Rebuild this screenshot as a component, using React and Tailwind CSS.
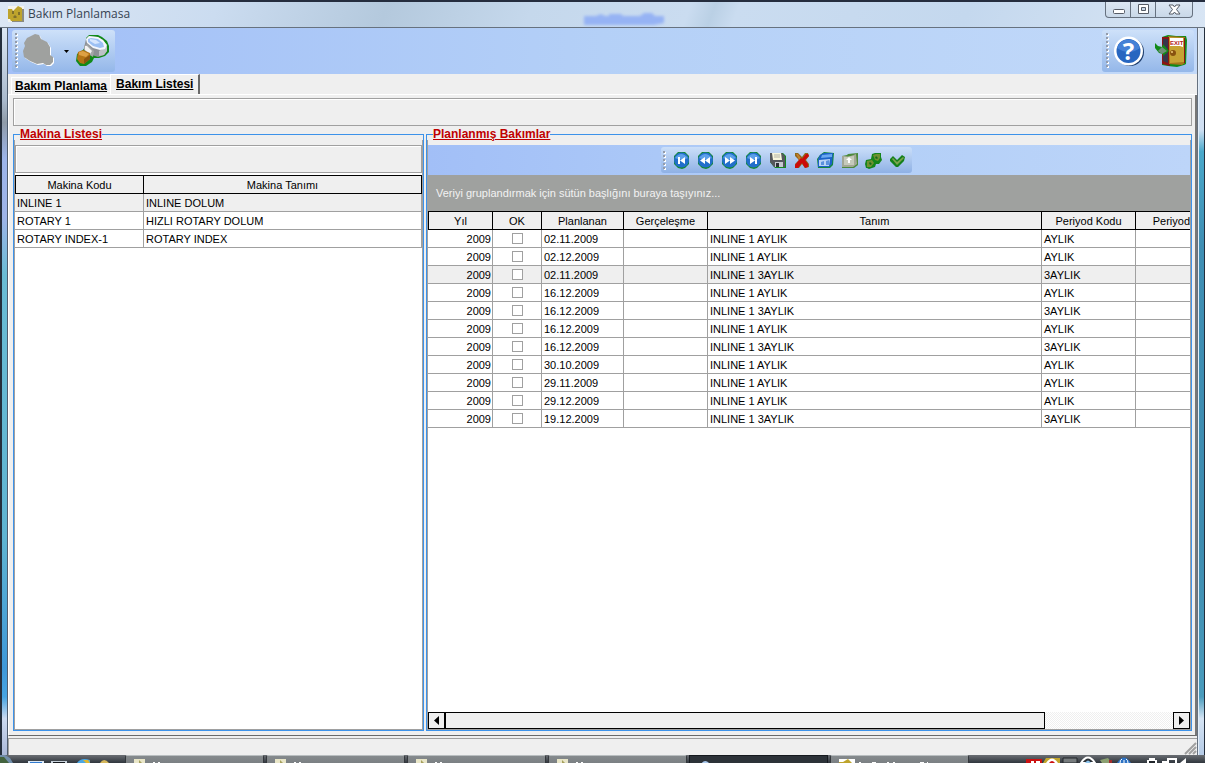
import React, { useState } from 'react';

const machines = [
  { code: 'INLINE 1', name: 'INLINE DOLUM' },
  { code: 'ROTARY 1', name: 'HIZLI ROTARY DOLUM' },
  { code: 'ROTARY INDEX-1', name: 'ROTARY INDEX' },
];

const plans = [
  { date: '02.11.2009', title: 'INLINE 1 AYLIK', period: 'AYLIK' },
  { date: '02.12.2009', title: 'INLINE 1 AYLIK', period: 'AYLIK' },
  { date: '02.11.2009', title: 'INLINE 1 3AYLIK', period: '3AYLIK' },
  { date: '16.12.2009', title: 'INLINE 1 AYLIK', period: 'AYLIK' },
  { date: '16.12.2009', title: 'INLINE 1 3AYLIK', period: '3AYLIK' },
  { date: '16.12.2009', title: 'INLINE 1 AYLIK', period: 'AYLIK' },
  { date: '16.12.2009', title: 'INLINE 1 3AYLIK', period: '3AYLIK' },
  { date: '30.10.2009', title: 'INLINE 1 AYLIK', period: 'AYLIK' },
  { date: '29.11.2009', title: 'INLINE 1 AYLIK', period: 'AYLIK' },
  { date: '29.12.2009', title: 'INLINE 1 AYLIK', period: 'AYLIK' },
  { date: '19.12.2009', title: 'INLINE 1 3AYLIK', period: '3AYLIK' },
];

const headCell = 'h-[18px] p-0 font-normal border-r border-b border-black bg-[#efefef] whitespace-nowrap overflow-hidden';
const bodyCell = 'h-[18px] py-0 pl-[2px] pr-[1px] border-r border-b border-[#a0a0a0] whitespace-nowrap overflow-hidden';

function AppIcon() {
  return (
    <svg width="16" height="16" viewBox="0 0 16 16" aria-hidden="true">
      <path d="M0 0h16v16H0z" fill="#f4f4ee" />
      <path d="M0 3h4l1 2 5-5 4 2v13H3l-1-2H0z" fill="#bea42c" />
      <path d="M14 3h2v13H4v-1h10z" fill="#8b8b80" />
      <path d="M4 5h2v3H4zM10 6h2v3h-2zM5 11l2-2 2 2-1 1H6z" fill="#80702c" />
    </svg>
  );
}

function MaskIcon() {
  return (
    <svg width="34" height="34" viewBox="0 0 34 34" aria-hidden="true">
      <path transform="translate(1 1)" d="M9 2l4-2 4 1 2 4 6 3 3 5v8l3 2v5l-3 3h-4l-3-2-6 1-7-3-6-4-1-6 2-5-1-3 3-5z" fill="#fff" />
      <path d="M9 2l4-2 4 1 2 4 6 3 3 5v8l3 2v5l-3 3h-4l-3-2-6 1-7-3-6-4-1-6 2-5-1-3 3-5z" fill="#9fa19f" />
    </svg>
  );
}

function SearchIcon() {
  return (
    <svg width="34" height="32" viewBox="0 0 34 32" aria-hidden="true">
      <path d="M10 3l3-3h9l4 2 5 4 2 5v6l-4 4-6 2h-5l-2 4-6 4H4l-4-5 1-7 6-4 3-5z" fill="#118a18" />
      <path d="M10 4l3-3 9 1 5 3 4 6v5l-3 4-6 2-6-2-8-7z" fill="#8d9196" />
      <path d="M28 13l3-2v5l-3 4-5 1v-5z" fill="#bdc1c6" />
      <path d="M10 4l3-3 9 1 5 3 4 5-2 4-5 1-7-2-6-5z" fill="#f4f7fc" />
      <path d="M12 4l3-1 7 1 5 4 1 4-4 1-7-2-5-4z" fill="#9cc0f3" />
      <path d="M14 4l6 1 4 3-5 1-5-3z" fill="#d6e6fd" />
      <path d="M8 11l3-2 7 7-1 6-5-3-4-4z" fill="#a4a6a8" />
      <path d="M9 11l2 0 5 5-2 3-5-4z" fill="#f2f2f2" />
      <path d="M2 17l5-2 7 3v6l-6 5-4-1-3-4z" fill="#b47415" />
      <path d="M3 17l4-1 6 3-3 3-7-2z" fill="#dda044" />
      <path d="M8 24l6-4v4l-6 5z" fill="#8d5510" />
    </svg>
  );
}

function HelpIcon() {
  return (
    <svg width="32" height="32" viewBox="0 0 32 32" aria-hidden="true">
      <circle cx="17" cy="17" r="14" fill="#1c3c6c" />
      <circle cx="15.500" cy="16" r="14.500" fill="#fff" />
      <circle cx="15.500" cy="16" r="12" fill="#2766c0" />
      <path d="M4 13a12 12 0 0 1 23 0q-11 8-23 0z" fill="#4481d6" />
      <text x="15.500" y="25" textAnchor="middle" fill="#fff" className="font-['Open_Sans',sans-serif] text-[24px] font-bold">?</text>
    </svg>
  );
}

function ExitIcon() {
  return (
    <svg width="32" height="32" viewBox="0 0 32 32" aria-hidden="true">
      <path d="M7 2l6-2 8 1 10 0 1 4-1 24-2 1-7 2-9-1-6-1z" fill="#118a18" />
      <path d="M7 2h8v29l-8-2z" fill="#8b1515" />
      <path d="M8 4h5v24l-5-2z" fill="#36364a" />
      <path d="M13 1l17 1v26l-3 2-13-1z" fill="#a5761a" />
      <path d="M14 2l15 1v24l-14 1z" fill="#c6a334" />
      <path d="M13 2h1v28h-1zM29 3h1v25h-1z" fill="#8b1515" />
      <path d="M15 3h13v9l-3-1H15z" fill="#fff" />
      <text x="15" y="10" fill="#b32020" className="font-['Liberation_Sans',sans-serif] text-[6px] font-bold">EXIT</text>
      <circle cx="18" cy="18" r="3" fill="#87520f" />
      <circle cx="17" cy="17" r="1" fill="#f0ce78" />
      <path d="M0 8l3 3 4 1 1-3 6 7-6 5v-2l-4-1-4-5z" fill="#118a18" />
      <path d="M7 12l5 4-5 3-4-3z" fill="#6f8f78" />
    </svg>
  );
}

function NavIcon({ kind }) {
  return (
    <svg width="17" height="17" viewBox="0 0 17 17" aria-hidden="true">
      <path d="M5 0h7l4 4v8l-4 4-3 1-4-1-4-4V4z" fill="#158a35" />
      <circle cx="8.500" cy="8" r="7.500" fill="#226fcb" />
      <path d="M2 6q6-8 13 0-6 3-13 0z" fill="#5ba0ea" />
      {kind === 'first' && <path d="M5 5h2v7H5zM12 5v7L7 8.500z" fill="#fff" />}
      {kind === 'prev' && <path d="M8 5v7L3 8.500zM13 5v7L8 8.500z" fill="#fff" />}
      {kind === 'next' && <path d="M4 5v7l5-3.500zM9 5v7l5-3.500z" fill="#fff" />}
      {kind === 'last' && <path d="M10 5h2v7h-2zM5 5v7l5-3.500z" fill="#fff" />}
    </svg>
  );
}

function SaveIcon() {
  return (
    <svg width="17" height="17" viewBox="0 0 17 17" aria-hidden="true">
      <path d="M1 1h13l3 3v12H6l-5-6z" fill="#138a1c" />
      <path d="M1 1h12l3 3v11H5l-4-5z" fill="#55575c" />
      <path d="M3 1h9l1 7H4z" fill="#f7f5dc" />
      <path d="M5 3h6M5 5h6" stroke="#b3b3a8" />
      <path d="M6 10h8v5H6z" fill="#c7cad0" />
      <path d="M7 11h3v4H7z" fill="#303238" />
    </svg>
  );
}

function DeleteIcon() {
  return (
    <svg width="17" height="17" viewBox="0 0 17 17" aria-hidden="true">
      <path d="M2 1h3l4 4 3-4h3l1 3-3 4 3 4v3l-4 1-3-4-3 4H2l0-4 4-4-4-4z" fill="#8c6b1c" />
      <path d="M3 2h2l4 5 4-5h2l1 2-4 4 3 4v3l-3 1-3-5-4 5H2v-3l4-5z" fill="#cc0b0b" />
      <path d="M3 2h2l3 4-2 2z" fill="#b8862e" />
    </svg>
  );
}

function CalendarIcon() {
  return (
    <svg width="17" height="17" viewBox="0 0 17 17" aria-hidden="true">
      <path d="M3 3l4-3 10 1-1 12-3 3H1L0 7z" fill="#15883d" />
      <path d="M3 3l4-2h9l-1 11-3 3H1L1 7z" fill="#1c62c8" />
      <path d="M5 3l10-1v3L4 6z" fill="#6aa8f0" />
      <path d="M2 8l11-1-1 7H2z" fill="#b9d3f6" />
      <path d="M4 10l3-1v4H4zM9 9l3-1v5H9z" fill="#5b92de" />
    </svg>
  );
}

function FolderIcon() {
  return (
    <svg width="17" height="17" viewBox="0 0 17 17" aria-hidden="true">
      <path d="M1 4l5-1 1-1 10-1v12l-4 3H1z" fill="#4c8a3a" />
      <path d="M1 4h3l3 1 8-3 1 10-4 3H1z" fill="#a2a795" />
      <path d="M3 5l10-1v9H3z" fill="#c6cabb" />
      <path d="M8 5l3 3H9v3H7V8H5z" fill="#fff" />
    </svg>
  );
}

function GearIcon() {
  return (
    <svg width="17" height="17" viewBox="0 0 17 17" aria-hidden="true">
      <path d="M7 2l3-1 3 0 3 0v4l1 3-3 4-3 0-1 3-3 1-3 1-2-1H1l-1-4 1-4 5-1z" fill="#15851c" />
      <path d="M8 3l3-1 4 0 0 4-2 3-3-1zM2 9l5-1 2 3-3 4-4 0z" fill="#6f9130" />
      <path d="M11 4l2 2-1 1-2-1zM5 10l2 2-2 1-1-2z" fill="#176b1d" />
    </svg>
  );
}

function CheckIcon() {
  return (
    <svg width="17" height="17" viewBox="0 0 17 17" aria-hidden="true">
      <path d="M1 7l3-3 4 4 5-5 3 2-1 4-6 6-2 0-6-6z" fill="#15801b" />
      <path d="M3 7l1-1 4 4 6-5 1 1-7 7z" fill="#7da34e" />
    </svg>
  );
}

function Grip({ className }) {
  return (
    <svg width="3" className={className} aria-hidden="true">
      <defs>
        <pattern id="grip" width="3" height="4" patternUnits="userSpaceOnUse">
          <path d="M1 1h2v2H1z" fill="#fff" />
          <path d="M0 0h2v2H0z" fill="#949cab" />
        </pattern>
      </defs>
      <rect width="3" height="100%" fill="url(#grip)" />
    </svg>
  );
}

function TitleBar() {
  return (
    <header className="h-7 shrink-0 flex items-start justify-between pl-2 pr-3 border-t-2 border-b border-t-[#252d3e] border-b-[#67727f] bg-[linear-gradient(110deg,#dce7f4_0%,#cbdcf0_18%,#b4c9dd_32%,#c5d8ec_44%,#cadcf0_57%,#bad0e5_59%,#cadcf0_61%,#c4d8ee_80%,#d8e5f4_100%)]">
      <div className="flex items-center gap-1 h-6">
        <AppIcon />
        <h1 className="font-['Open_Sans',sans-serif] text-[12px] leading-4 text-[#364352]">Bakım Planlamasa</h1>
      </div>
      {/* blurred caption of the window behind the glass */}
      <svg width="90" height="18" className="mt-2 mr-auto ml-[450px]" aria-hidden="true">
        <defs>
          <filter id="soft" x="-10%" y="-40%" width="120%" height="180%"><feGaussianBlur stdDeviation="1.500" /></filter>
        </defs>
        <path d="M4 6h12l5-2 4 2h4V4h12l2 2h17l4-3h8l3 3h9v7l-10 2H4z" fill="#96b3f4" filter="url(#soft)" />
      </svg>
      <div className="flex h-4 rounded-b-[4px] border border-t-0 border-[#66717f] bg-gradient-to-b from-[#dce7f3] to-[#c9d8e8]">
        <button type="button" aria-label="Simge durumuna küçült" className="w-[25px] flex items-center justify-center border-r border-[#66717f]">
          <svg width="13" height="11"><rect x="1.500" y="5.500" width="11" height="4" rx="1" fill="#fff" stroke="#565c66" /></svg>
        </button>
        <button type="button" aria-label="Ekranı kapla" className="w-[25px] flex items-center justify-center border-r border-[#66717f]">
          <svg width="13" height="11"><path d="M1.500.500h10v9h-10z" fill="#fff" stroke="#565c66" /><path d="M4.500 3.500h4v3h-4z" fill="#c9d8e8" stroke="#565c66" /></svg>
        </button>
        <button type="button" aria-label="Kapat" className="w-9 flex items-center justify-center">
          <svg width="13" height="12"><path d="M1 1h4l1.500 2L8 1h4L8.500 5.500 12 10H8L6.500 8 5 10H1l3.500-4.500z" fill="#fff" stroke="#565c66" /></svg>
        </button>
      </div>
    </header>
  );
}

function MainToolbar() {
  return (
    <div className="h-[46px] shrink-0 flex items-center justify-between pl-1 pr-[3px] bg-gradient-to-r from-[#a2bff7] via-[#b4d0f7] to-[#c2d9f9]">
      <div className="h-[42px] w-[103px] flex items-center gap-1 pl-[3px] rounded-[3px] bg-gradient-to-b from-[#cee1f9] to-[#94b7e9]">
        <Grip className="h-9" />
        <button type="button" aria-label="Makina"><MaskIcon /></button>
        <button type="button" aria-label="Makina seçenekleri" className="w-3 flex justify-center">
          <svg width="5" height="3"><path d="M0 0h5L2.500 3z" /></svg>
        </button>
        <button type="button" aria-label="Ara"><SearchIcon /></button>
      </div>
      <div className="h-[42px] w-[92px] flex items-center gap-1 pl-1 rounded-[3px] bg-gradient-to-b from-[#cee1f9] to-[#94b7e9]">
        <Grip className="h-9" />
        <div className="flex gap-[10px]">
          <button type="button" aria-label="Yardım"><HelpIcon /></button>
          <button type="button" aria-label="Çıkış"><ExitIcon /></button>
        </div>
      </div>
    </div>
  );
}

function GroupBox({ title, children }) {
  return (
    <fieldset className="min-w-0 h-full flex flex-col border border-[#3c92ea]">
      <legend className="ml-[6px] h-3 text-[12px] leading-3 font-bold underline text-[#c00000]">{title}</legend>
      <div className="flex-1 min-h-0 flex flex-col border-l border-b border-r border-[#a0a0a0]">
        {children}
      </div>
    </fieldset>
  );
}

function MachineList() {
  return (
    <GroupBox title="Makina Listesi">
      <div className="mt-[5px] h-7 shrink-0 border border-[#a0a0a0] shadow-[inset_1px_1px_0_#fff]" />
      <div className="flex-1 bg-white pt-[2px]">
        <table className="w-full table-fixed border-separate border-spacing-0 border-t border-black">
          <colgroup>
            <col className="w-[129px]" />
            <col />
          </colgroup>
          <thead>
            <tr>
              <th className={`${headCell} border-l`}>Makina Kodu</th>
              <th className={headCell}>Makina Tanımı</th>
            </tr>
          </thead>
          <tbody>
            {machines.map((m, i) => (
              <tr key={m.code} className={i === 0 ? 'bg-[#efefef]' : 'bg-white'}>
                <td className={bodyCell}>{m.code}</td>
                <td className={bodyCell}>{m.name}</td>
              </tr>
            ))}
          </tbody>
        </table>
      </div>
    </GroupBox>
  );
}

function PlanToolbar() {
  return (
    <div className="mt-[5px] h-[30px] shrink-0 flex items-center justify-center bg-gradient-to-r from-[#a2bff7] via-[#b1cef7] to-[#bdd5f9]">
      <div className="h-[26px] w-[251px] flex items-center gap-[7px] pl-[2px] mr-[46px] rounded-[3px] bg-gradient-to-b from-[#cbdff9] to-[#8fb1e5]">
        <Grip className="h-[19px]" />
        <button type="button" aria-label="İlk kayıt"><NavIcon kind="first" /></button>
        <button type="button" aria-label="Önceki kayıt"><NavIcon kind="prev" /></button>
        <button type="button" aria-label="Sonraki kayıt"><NavIcon kind="next" /></button>
        <button type="button" aria-label="Son kayıt"><NavIcon kind="last" /></button>
        <button type="button" aria-label="Kaydet"><SaveIcon /></button>
        <button type="button" aria-label="Sil"><DeleteIcon /></button>
        <button type="button" aria-label="Takvim"><CalendarIcon /></button>
        <button type="button" aria-label="Aktar"><FolderIcon /></button>
        <button type="button" aria-label="Ayarlar"><GearIcon /></button>
        <button type="button" aria-label="Onayla"><CheckIcon /></button>
      </div>
    </div>
  );
}

function PlanTable() {
  const [done, setDone] = useState({});

  const toggle = (i) => {
    setDone({ ...done, [i]: !done[i] });
  };

  return (
    <table className="w-full table-fixed border-separate border-spacing-0 border-t border-black">
      <colgroup>
        <col className="w-[65px]" />
        <col className="w-[49px]" />
        <col className="w-[82px]" />
        <col className="w-[84px]" />
        <col />
        <col className="w-[94px]" />
        <col className="w-[54px]" />
      </colgroup>
      <thead>
        <tr>
          <th className={`${headCell} border-l`}>Yıl</th>
          <th className={headCell}>OK</th>
          <th className={headCell}>Planlanan</th>
          <th className={headCell}>Gerçeleşme</th>
          <th className={headCell}>Tanım</th>
          <th className={headCell}>Periyod Kodu</th>
          <th className="h-[18px] p-0 text-right font-normal border-b border-black bg-[#efefef] whitespace-nowrap">Periyod</th>
        </tr>
      </thead>
      <tbody>
        {plans.map((p, i) => (
          <tr key={i} className={i === 2 ? 'bg-[#efefef]' : 'bg-white'}>
            <td className={`${bodyCell} text-right`}>2009</td>
            <td className={bodyCell}>
              <input
                type="checkbox"
                aria-label={`OK ${p.date}`}
                checked={!!done[i]}
                onChange={() => toggle(i)}
                className="block mx-auto appearance-none w-[11px] h-[11px] border border-[#a0a0a0] bg-white checked:bg-[#a0a0a0]"
              />
            </td>
            <td className={bodyCell}>{p.date}</td>
            <td className={bodyCell}></td>
            <td className={bodyCell}>{p.title}</td>
            <td className={bodyCell}>{p.period}</td>
            <td className="border-b border-[#a0a0a0]"></td>
          </tr>
        ))}
      </tbody>
    </table>
  );
}

function ScrollBar() {
  return (
    <div className="h-[17px] shrink-0 flex">
      <button type="button" aria-label="Sola kaydır" className="w-[17px] flex items-center justify-center border border-black bg-[#efefef]">
        <svg width="5" height="9"><path d="M5 0v9L0 4.500z" /></svg>
      </button>
      <div className="flex-1 flex bg-[repeating-conic-gradient(#efefef_0_25%,#ffffff_0_50%)] bg-[length:2px_2px]">
        <div className="flex-[14] border border-black bg-[#efefef]" />
        <div className="flex-[3]" />
      </div>
      <button type="button" aria-label="Sağa kaydır" className="w-[17px] flex items-center justify-center border border-black bg-[#efefef]">
        <svg width="5" height="9"><path d="M0 0v9l5-4.500z" /></svg>
      </button>
    </div>
  );
}

function PlannedList() {
  return (
    <GroupBox title="Planlanmış Bakımlar">
      <PlanToolbar />
      <div className="h-9 shrink-0 flex items-center px-2 bg-[#9fa19f] text-[#f2f2f2]">
        Veriyi gruplandırmak için sütün başlığını buraya taşıyınız...
      </div>
      <div className="flex-1 min-h-0 bg-white overflow-hidden">
        <PlanTable />
      </div>
      <ScrollBar />
    </GroupBox>
  );
}

function TaskButton({ active, children }) {
  return (
    <button
      type="button"
      className={
        active
          ? 'w-[139px] h-7 pl-2 flex items-start border border-[#15191e] bg-[#2c3238]'
          : 'w-[139px] h-7 pl-2 flex items-start rounded-t-[2px] border border-[#33373b] border-t-[#b9bec0] bg-gradient-to-b from-[#858a8d] to-[#606568]'
      }
    >
      {children}
    </button>
  );
}

function NoteMark() {
  return (
    <svg width="40" height="10" aria-hidden="true">
      <path d="M0 3h11v7H0z" fill="#e9e6c8" />
      <path d="M5 4l3 3-3 2z" fill="#a6a05c" />
      <path d="M19 6h2v1h-2zM24 6h2v1h-2z" fill="#fff" />
    </svg>
  );
}

function Taskbar() {
  return (
    <footer className="h-2 shrink-0 flex items-start overflow-hidden bg-gradient-to-b from-[#6b6f74] to-[#30363d]">
      <svg width="125" height="8" className="shrink-0" aria-hidden="true">
        <path d="M0 0h5l5 3 3 5H0z" fill="#718eaa" />
        <path d="M0 2h4l5 6H0z" fill="#43633e" />
        <path d="M28 6h16v2H28z" fill="#dce9f7" />
        <path d="M30 7h12v1H30z" fill="#327bd0" />
        <path d="M51 6h16v2H51z" fill="#c8d2db" />
        <path d="M53 7h12v1H53z" fill="#15191e" />
        <path d="M77 8q4-6 13-3v3z" fill="#4ba7e5" />
        <path d="M83 5h5l2 3h-4z" fill="#e0b830" />
        <path d="M100 8q4-6 9 0z" fill="#d5b75b" />
      </svg>
      <div className="flex gap-[2px]">
        <TaskButton><NoteMark /></TaskButton>
        <TaskButton><NoteMark /></TaskButton>
        <TaskButton><NoteMark /></TaskButton>
        <TaskButton><NoteMark /></TaskButton>
        <TaskButton active>
          <svg width="14" height="10" aria-hidden="true"><path d="M3 8q4-6 9 0v2H3z" fill="#a9c8ec" /></svg>
        </TaskButton>
        <TaskButton>
          <svg width="110" height="10" aria-hidden="true">
            <path d="M0 3h16v7H0z" fill="#fff" />
            <path d="M0 6h4l5-3 4 4v3H0z" fill="#bea42c" />
            <path d="M20 6h2v1h-2zM33 6h4v1h-4zM48 6h2v1h-2zM54 6h2v1h-2zM81 6h4v1h-4zM88 6h1v1h-1z" fill="#fff" />
          </svg>
        </TaskButton>
      </div>
      <svg width="180" height="8" className="shrink-0 ml-auto" aria-hidden="true">
        <path d="M1 4h16v4H1z" fill="#cc1111" />
        <path d="M6 6h3v2H6zM11 6h4v2h-4z" fill="#fff" />
        <path d="M21 3h14v5H18z" fill="#c3a62c" />
        <path d="M21 8q6-9 12 0z" fill="#fff" />
        <path d="M24 8q3-4 6 0z" fill="#cc1111" />
        <path d="M38 3h14v5H38z" fill="#777c7e" stroke="#22262a" />
        <path d="M56 8q7-11 14 0z" fill="#2c3238" stroke="#fff" strokeWidth="2" />
        <path d="M60 8q3-5 6 0z" fill="#8ec5ee" />
        <path d="M75 5l8-2 4 5H77z" fill="#8ba071" />
        <path d="M84 5h3v3h-3z" fill="#a52c2c" />
        <path d="M92 8q7-11 14 0z" fill="#2c72c4" />
        <path d="M95 8q0-3 2-4M103 8q0-3-2-4M99 5v3" stroke="#fff" fill="none" />
        <path d="M124 3h6v2h2v3h-10V5h2z" fill="#fff" />
        <path d="M124 6h6v2h-6z" fill="#20252a" />
        <path d="M137 7h5M143 8V4h8v4" stroke="#fff" strokeWidth="2" fill="none" />
        <path d="M155 8l6-5v5z" fill="#fff" />
      </svg>
    </footer>
  );
}

function App() {
  const [tab, setTab] = useState('liste');

  return (
    <div className="h-screen flex flex-col overflow-hidden bg-[#efefef] text-black text-[11px] leading-[14px] font-['Liberation_Sans',Arial,sans-serif]">
      <TitleBar />
      <div className="flex-1 min-h-0 flex">
        <div className="w-2 shrink-0 border-l-2 border-r border-l-[#242e3c] border-r-[#4d5b6d] bg-[linear-gradient(#dce7f4_0%,#a9b9cc_10%,#8f9ba8_13%,#9cb5ea_18%,#9eb4e8_26%,#6abcd5_34%,#5fb4d2_70%,#3f98d8_88%,#46a4e2_92%,#ccdaf0_95%,#aab8d8_100%)]" />
        <main className="flex-1 min-w-0 flex flex-col">
          <MainToolbar />
          <div role="tablist" className="h-[21px] shrink-0 flex items-end pl-[3px] text-[12px] font-bold border-b border-white">
            <button
              type="button"
              role="tab"
              aria-selected={tab === 'planlama'}
              onClick={() => setTab('planlama')}
              className="h-[17px] px-[3px] underline border-l border-t border-white"
            >
              Bakım Planlama
            </button>
            <button
              type="button"
              role="tab"
              aria-selected={tab === 'liste'}
              onClick={() => setTab('liste')}
              className="h-5 px-[5px] pb-[2px] underline border-l border-t border-l-white border-t-white border-r-2 border-r-[#696969]"
            >
              Bakım Listesi
            </button>
          </div>
          <div className="flex-1 min-h-0 flex flex-col pl-1 pr-[3px] pt-[3px] pb-1 border-l border-l-white border-r-2 border-r-[#777777] border-b border-b-[#696969]">
            <div className="h-7 shrink-0 border border-[#a0a0a0] shadow-[inset_1px_1px_0_#fff]" />
            <div className="flex-1 min-h-0 pt-[2px] grid grid-cols-[411px_1fr] gap-[2px]">
              <MachineList />
              <PlannedList />
            </div>
          </div>
          <div className="h-[19px] shrink-0 pt-[2px]">
            <div className="h-full flex items-end justify-end border-t border-l border-[#a0a0a0]">
              <svg width="13" height="13" aria-hidden="true">
                <path d="M1 12L12 1M5 12l7-7M9 12l3-3" stroke="#a0a0a0" strokeWidth="2" />
              </svg>
            </div>
          </div>
        </main>
        <div className="w-2 shrink-0 border-l border-r border-l-[#66717f] border-r-[#242e3c] bg-[linear-gradient(90deg,#e4eef8_0_1px,transparent_1px),linear-gradient(#dce7f4_0%,#cfdff2_14%,#4aa9cb_17%,#3f8fb4_30%,#3d8cb0_70%,#4a9cbd_92%,#d5e4f4_95%,#b5cbe6_100%)]" />
      </div>
      <Taskbar />
    </div>
  );
}

export default App;
